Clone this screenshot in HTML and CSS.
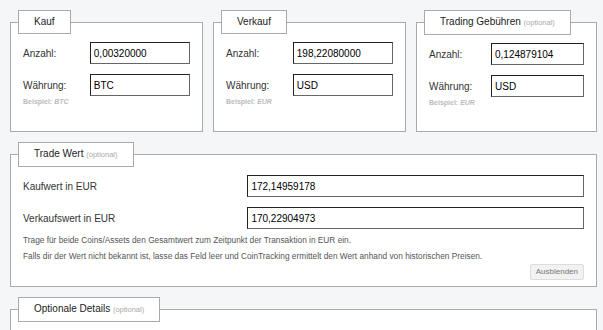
FILE: index.html
```html
<html>
<head>
	<link rel="stylesheet" href="styles.css">
</head>
<body>
	<div class="cols">
		<fieldset class="box">
			<legend>Kauf</legend>
			<div class="fields">
				<label>Anzahl:</label><input class="inp" value="0,00320000">
				<label>Währung:</label><input class="inp" value="BTC">
				<div class="hint">Beispiel: <i>BTC</i></div>
			</div>
		</fieldset>
		<fieldset class="box">
			<legend>Verkauf</legend>
			<div class="fields">
				<label>Anzahl:</label><input class="inp" value="198,22080000">
				<label>Währung:</label><input class="inp" value="USD">
				<div class="hint">Beispiel: <i>EUR</i></div>
			</div>
		</fieldset>
		<fieldset class="box">
			<legend>Trading Gebühren <span class="opt">(optional)</span></legend>
			<div class="fields">
				<label>Anzahl:</label><input class="inp" value="0,124879104">
				<label>Währung:</label><input class="inp" value="USD">
				<div class="hint">Beispiel: <i>EUR</i></div>
			</div>
		</fieldset>
	</div>

	<fieldset class="box wide">
		<legend>Trade Wert <span class="opt">(optional)</span></legend>
		<div class="fields">
			<label>Kaufwert in EUR</label><input class="inp" value="172,14959178">
			<label>Verkaufswert in EUR</label><input class="inp" value="170,22904973">
		</div>
		<div class="help">
			<p>Trage für beide Coins/Assets den Gesamtwert zum Zeitpunkt der Transaktion in EUR ein.</p>
			<p>Falls dir der Wert nicht bekannt ist, lasse das Feld leer und CoinTracking ermittelt den Wert anhand von historischen Preisen.</p>
			<div class="actions"><button class="btn">Ausblenden</button></div>
		</div>
	</fieldset>

	<fieldset class="box wide">
		<legend>Optionale Details <span class="opt">(optional)</span></legend>
		<div class="fields tall">
			<label>Börse</label><input class="inp" value="">
			<label>Gruppe</label><input class="inp" value="">
		</div>
	</fieldset>
</body>
</html>
```

FILE: styles.css
```css
body { margin:0; padding:10px 6px 0 10px; background-color:#f5f6f8; color:#333; font-family:"Liberation Sans", Arial, sans-serif; font-size:10px; }

.cols { display:grid; grid-template-columns:193px 193px 1fr; column-gap:10px; }

FIELDSET.box { margin:0; padding:0; min-width:0; border:1px solid #aaa; background-color:#fff; }
FIELDSET.wide { margin-top:10px; }
LEGEND { margin-left:7px; padding:0 15px; border:1px solid #aaa; background-color:#fff; color:#222; font-size:10px; line-height:22px; }
SPAN.opt { color:#aaa; font-size:7.5px; }

.fields { display:grid; grid-template-columns:40% 60%; row-gap:10px; align-items:center; padding:8px 12px 24px; }
.wide .fields { padding-bottom:0; }
.fields LABEL { color:#333; }
.fields.tall LABEL { line-height:28px; }
.inp { width:100%; height:22px; box-sizing:border-box; margin:0; padding:0 3px; border:1px solid; border-color:#222 #666 #666 #222; color:#000; font-family:"Liberation Sans", Arial, sans-serif; font-size:10px; }
.hint { grid-column:1; margin-top:-10px; color:#bbb; font-size:7px; font-weight:bold; line-height:9px; }

.help { padding:3px 12px 6px; color:#555; font-size:8.3px; line-height:16px; }
.help P { margin:0; }
.actions { text-align:right; }
.btn { height:16px; margin:0; padding:0 5px; border:1px solid #ddd; border-radius:2px; background-color:#f2f2f2; color:#777; font-family:"Liberation Sans", Arial, sans-serif; font-size:8px; line-height:14px; }
```
